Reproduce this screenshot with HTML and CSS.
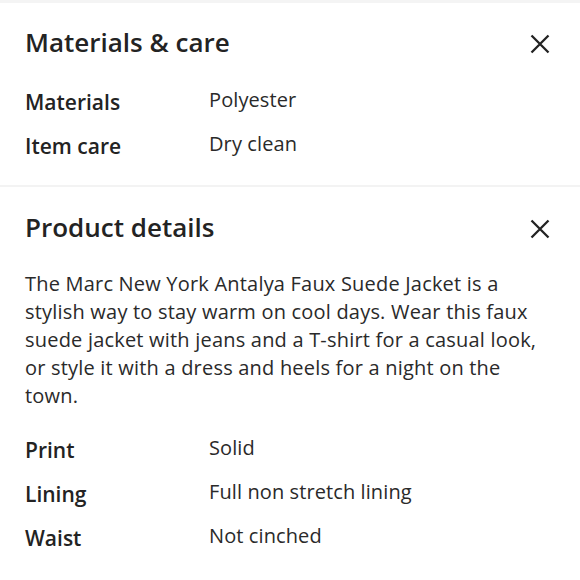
FILE: index.html
```html
<!DOCTYPE html>
<html lang="en">
<head>
<meta charset="utf-8">
<title>Materials &amp; care</title>
<link rel="stylesheet" href="styles.css">
</head>
<body>
<div class="topbar"></div>
<section class="panel panel-materials">
  <header class="panel-head">
    <h2 class="panel-title">Materials &amp; care</h2>
    <button class="close" aria-label="Close">
      <svg viewBox="0 0 20 20" width="20" height="20"><path d="M1.5 1.5 L18.5 18.5 M18.5 1.5 L1.5 18.5" /></svg>
    </button>
  </header>
  <dl class="specs">
    <div class="spec"><dt>Materials</dt><dd>Polyester</dd></div>
    <div class="spec"><dt>Item care</dt><dd>Dry clean</dd></div>
  </dl>
</section>
<div class="divider"></div>
<section class="panel panel-details">
  <header class="panel-head">
    <h2 class="panel-title">Product details</h2>
    <button class="close" aria-label="Close">
      <svg viewBox="0 0 20 20" width="20" height="20"><path d="M1.5 1.5 L18.5 18.5 M18.5 1.5 L1.5 18.5" /></svg>
    </button>
  </header>
  <p class="desc">The Marc New York Antalya Faux Suede Jacket is a stylish way to stay warm on cool days. Wear this faux suede jacket with jeans and a T-shirt for a casual look, or style it with a dress and heels for a night on the town.</p>
  <dl class="specs">
    <div class="spec"><dt>Print</dt><dd>Solid</dd></div>
    <div class="spec"><dt>Lining</dt><dd>Full non stretch lining</dd></div>
    <div class="spec"><dt>Waist</dt><dd>Not cinched</dd></div>
  </dl>
</section>
</body>
</html>
```
FILE: styles.css
```css
html, body {
  margin: 0;
  padding: 0;
  background: #ffffff;
}
body {
  font-family: "Open Sans", "Noto Sans", "Liberation Sans", sans-serif;
  color: #262626;
  width: 580px;
}
.topbar {
  height: 3px;
  background: #f4f4f4;
}
.panel {
  padding: 23px 30px 0 25px;
}
.panel-materials {
  padding-bottom: 25px;
}
.panel-details {
  padding-top: 24px;
}
.panel-head {
  display: flex;
  justify-content: space-between;
  align-items: center;
}
.panel-title {
  margin: 0;
  font-size: 26px;
  line-height: 32px;
  font-weight: 600;
  color: #232323;
}
.close {
  border: 0;
  background: none;
  padding: 0;
  margin-top: 4px;
  width: 20px;
  height: 20px;
  display: flex;
}
.close svg {
  stroke: #222;
  stroke-width: 2.3;
  fill: none;
}
.divider {
  height: 2px;
  background: #f3f3f3;
}
.specs {
  margin: 30px 0 0;
  display: flex;
  flex-direction: column;
  gap: 16px;
}
.spec {
  display: flex;
  align-items: flex-start;
}
.spec dt {
  width: 184px;
  font-size: 21px;
  line-height: 28px;
  font-weight: 600;
  color: #232323;
}
.spec dd {
  margin: 0;
  font-size: 20px;
  line-height: 24px;
  letter-spacing: 0.1px;
  color: #2a2a2a;
}
.desc {
  margin: 27px 4px 0 0;
  font-size: 20px;
  line-height: 28px;
  letter-spacing: 0.2px;
  color: #2a2a2a;
}
.desc + .specs {
  margin-top: 26px;
}
```
